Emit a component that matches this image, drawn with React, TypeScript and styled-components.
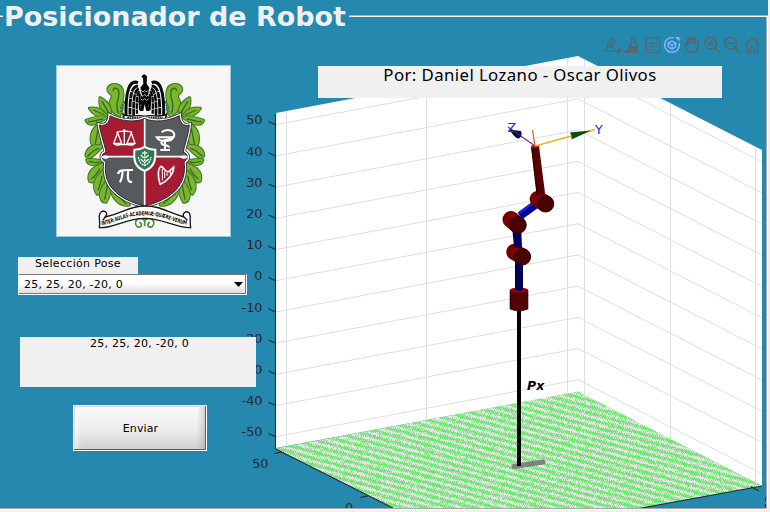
import React from "react";
import styled, { createGlobalStyle, css } from "styled-components";

const BLUE = "#2588ae";
const FACE = "#f0f0f0";

const Global = createGlobalStyle`
  html, body { margin: 0; padding: 0; background: ${FACE}; overflow: hidden; }
  * { box-sizing: border-box; }
`;

const Window = styled.div`
  width: 770px;
  height: 512px;
  background: ${FACE};
  font-family: "DejaVu Sans", sans-serif;
  color: #000;
`;

const Panel = styled.section`
  width: 768px;
  height: 510px;
  display: flex;
  flex-direction: column;
  background: ${BLUE};
`;

const Header = styled.header`
  height: 17px;
  display: flex;
  align-items: flex-end;
  flex: none;
`;

const Rule = styled.span<{ $w?: number }>`
  height: 2px;
  border-top: 1px solid #a5b0b5;
  background: #fff;
  ${(p) => (p.$w ? css`width: ${p.$w}px; flex: none;` : css`flex: 1;`)}
`;

const Title = styled.h1`
  width: 346px;
  height: 17px;
  margin: 0;
  padding-left: 1px;
  position: relative;
  z-index: 2;
  font-size: 26.95px;
  line-height: 33px;
  white-space: nowrap;
  color: ${FACE};
`;

const Body = styled.div`
  position: relative;
  flex: 1;
  min-height: 0;
  display: grid;
  grid-template-columns: 276px 1fr;
  border-right: 1px solid #fff;
  border-bottom: 1px solid #fff;
  box-shadow: inset -1px -1px 0 #a8a8a8;
`;

const PlotSvg = styled.svg`
  position: absolute;
  inset: 0;
  width: 766px;
  height: 491px;
  display: block;
`;

const Sidebar = styled.aside`
  position: relative;
  display: flex;
  flex-direction: column;
  align-items: flex-start;
  padding: 48px 0 0 18px;
`;

const CrestSvg = styled.svg`
  display: block;
  flex: none;
  width: 175px;
  height: 172px;
  margin: 0 0 20px 38px;
`;

const Caption = styled.label`
  width: 120px;
  height: 17px;
  background: ${FACE};
  font-size: 11px;
  line-height: 13px;
  letter-spacing: 0.32px;
  text-align: center;
`;

const Select = styled.button`
  width: 229px;
  height: 21px;
  display: flex;
  align-items: center;
  justify-content: space-between;
  padding: 0 3px 1px 5px;
  border: 1px solid;
  border-color: #777 #fff #fff #f4f4f4;
  border-radius: 0;
  box-shadow: inset -1px -1px 0 #777;
  background: linear-gradient(#fff 40%, #dcdcdc);
  color: #000;
  font: 11px "DejaVu Sans", sans-serif;
  letter-spacing: 0.22px;
`;

const Value = styled.output`
  width: 236px;
  height: 50px;
  margin: 42px 0 18px 2px;
  padding-left: 3px;
  background: ${FACE};
  font-size: 11px;
  line-height: 13px;
  letter-spacing: 0.22px;
  text-align: center;
`;

const Push = styled.button`
  width: 134px;
  height: 46px;
  margin-left: 55px;
  padding: 0 0 0 1px;
  border: 1px solid #fff;
  border-radius: 0;
  box-shadow: inset -1px -1px 0 #5c5c6c, inset 1px 1px 0 #d8d8dc;
  background:
    linear-gradient(90deg, rgba(170, 170, 175, 0) 93%, rgba(150, 150, 155, 0.45)),
    linear-gradient(90deg, rgba(255, 255, 255, 0.6), rgba(255, 255, 255, 0) 6%),
    linear-gradient(#fafafa, #eeeeee 50%, #d0d0d0);
  color: #000;
  font: 11px "DejaVu Sans", sans-serif;
  letter-spacing: 0.1px;
`;

const Main = styled.main`
  position: relative;
  display: flex;
  flex-direction: column;
`;

const Toolbar = styled.nav`
  display: flex;
  justify-content: flex-end;
  padding: 18px 5px 0 0;
  height: 49px;
`;

const Tool = styled.button<{ $active?: boolean }>`
  width: 20px;
  height: 20px;
  padding: 2px;
  border: 0;
  background: none;
  color: ${(p) => (p.$active ? "#86b4ff" : "#56676f")};
  svg { display: block; width: 16px; height: 16px; overflow: visible; }
`;

const Author = styled.p`
  width: 404px;
  height: 32px;
  margin: 0 0 0 42px;
  background: ${FACE};
  font-family: "Noto Sans", "DejaVu Sans", sans-serif;
  font-size: 16.8px;
  letter-spacing: 0.41px;
  line-height: 18px;
  text-align: center;
  white-space: nowrap;
`;

/* ---------- toolbar icons ---------- */

const tools: { name: string; active?: boolean; art: React.ReactNode }[] = [
  {
    name: "Exportar",
    art: (
      <>
        <path d="M0.500 14.500h10.500l-2-4.500H3.500zM3.500 10C3 5.500 5 3.500 8 3.500V0.800l4 3.800-4 3.400V5.800C6 5.800 5.500 7.500 6 10" />
        <path fill="currentColor" d="M12.500 15h3.500v-3.500z" />
      </>
    ),
  },
  {
    name: "Pincel",
    art: (
      <>
        <path d="M7.500 0.600h3.500v6l2 1.500v2H5.500V8l2-1.500z" />
        <path fill="currentColor" d="M5.500 10h7.500l.5 5.400H0C3 14 5 12.500 5.500 10z" />
      </>
    ),
  },
  {
    name: "Datos",
    art: <path d="M2.500 0.600h13v14.900h-13V10L0.500 8l2-2zM5.500 6.200h7.500M5.500 9.500h7.500" />,
  },
  {
    name: "Rotar 3D",
    active: true,
    art: (
      <>
        <path d="M9.500 0.700A7.400 7.400 0 1 0 15.200 6" strokeWidth="1.500" />
        <path fill="currentColor" stroke="none" d="M11 0h4.500v4.500z" />
        <path d="M8 4l3.700 2v4L8 12.200 4.300 10V6zM4.300 6L8 8.200 11.700 6M8 8.200v4" strokeWidth="1.300" />
      </>
    ),
  },
  {
    name: "Mover",
    art: (
      <path
        strokeWidth="1.400"
        d="M4.800 15.400C4 12 0.500 9 0.600 7.200c1-1 2.500.3 3.500 2L3 3c.3-1.300 1.700-1.300 2 0l1 4V1.500c.3-1.200 1.800-1.200 2 0V7l.7-5.200c.3-1.200 1.900-1.100 2 0L10.600 7.500l1.400-4c.5-1 2-.7 1.900.5C13.700 7 14.500 12 11.500 15.400z"
      />
    ),
  },
  {
    name: "Acercar",
    art: <path strokeWidth="1.500" d="M12.600 6.300a5.900 5.900 0 1 1-11.800 0a5.900 5.900 0 1 1 11.800 0M10.800 10.800l4.900 4.900M3.700 6.300h6M6.700 3.300v6" />,
  },
  {
    name: "Alejar",
    art: <path strokeWidth="1.500" d="M12.600 6.300a5.900 5.900 0 1 1-11.800 0a5.900 5.900 0 1 1 11.800 0M10.800 10.800l4.900 4.900M3.700 6.300h6" />,
  },
  {
    name: "Inicio",
    art: <path d="M0.500 8.500L8 1l7.500 7.500M12.500 5V1M2.800 7.500v8h3.700V10h3.200v5.500h3.700v-8" />,
  },
];

/* ---------- university crest ---------- */

const Leaf = ({ d, vein }: { d: string; vein: string }) => (
  <>
    <path d={d} fill="#3f7828" stroke="#3f7828" strokeWidth="9" strokeLinejoin="round" />
    <path d={d} fill="#7ab52b" stroke="#7ab52b" strokeWidth="3" />
    <path d={vein} fill="none" stroke="#2f6b2c" strokeWidth="4" />
  </>
);

const LeafSide = () => (
  <g>
    <Leaf d="M208 168C178 150 174 130 186 112C192 98 170 100 174 84C180 68 210 68 217 88C224 116 210 126 217 146Z" vein="M206 160C190 132 212 112 206 92C202 80 188 82 190 92" />
    <Leaf d="M180 165C158 158 146 138 150 112C172 124 186 142 180 165Z" vein="M176 160C170 145 162 133 155 122" />
    <Leaf d="M172 170C158 146 138 140 118 144C128 162 146 170 172 170Z" vein="M164 164L130 149" />
    <Leaf d="M170 172C150 166 128 172 108 180C114 198 140 192 150 184Z" vein="M160 176C140 176 128 188 114 183" />
    <Leaf d="M147 192C160 220 158 246 134 265C116 242 120 210 147 192Z" vein="M145 205C140 225 138 242 135 256" />
    <Leaf d="M158 258C134 250 108 262 108 286C114 302 134 284 158 258Z" vein="M148 264C132 266 120 280 112 288" />
    <Leaf d="M160 298C140 304 122 292 110 299C114 316 140 318 160 298Z" vein="M150 304C138 310 126 306 116 303" />
    <Leaf d="M158 310C138 318 110 330 118 362C134 374 158 342 158 310Z" vein="M150 325C142 338 134 350 124 356" />
    <Leaf d="M160 332C168 360 164 384 142 402C124 380 136 350 160 332Z" vein="M156 346C154 365 148 378 144 390" />
    <Leaf d="M174 360C186 378 180 408 168 426C142 424 148 382 174 360Z" vein="M172 374C170 392 166 406 164 418" />
    <Leaf d="M184 390C214 394 234 414 238 434C214 440 188 418 184 390Z" vein="M192 400C210 408 220 424 230 431" />
  </g>
);

const SHIELD = "M148 194C168 200 180 184 180 166C210 182 258 188 284 174C310 188 358 182 388 166C388 184 400 200 418 194C414 230 402 258 400 276C416 280 416 298 402 304C412 370 370 416 284 437C198 416 156 370 168 304C152 298 152 280 168 276C166 258 154 230 148 194Z";

const Wing = () => (
  <g fill="none" stroke="#0b0b0d">
    <path d="M264 67C240 58 226 86 228 172" strokeWidth="9" />
    <path d="M264 77C244 78 239 108 240 172" strokeWidth="8.500" strokeDasharray="26 2 18 2" />
    <path d="M266 84C252 92 250 122 251 168" strokeWidth="8" strokeDasharray="20 2" />
    <path d="M268 92C259 106 260 130 261 160" strokeWidth="7" strokeDasharray="17 2" />
    <path d="M270 100C266 120 270 132 270 150" strokeWidth="6" />
  </g>
);

const Crest = () => (
  <CrestSvg viewBox="18 14 525 516" role="img" aria-label="Escudo">
    <defs>
      <clipPath id="shield"><path d={SHIELD} /></clipPath>
      <path id="motto" d="M154 491C192 488 220 462 284 462C348 462 378 488 416 491" />
    </defs>
    <rect x="18" y="14" width="525" height="516" fill="#9cc8d8" />
    <rect x="21" y="17" width="519" height="510" fill="#f6f6f6" />
    <LeafSide />
    <g transform="translate(569 0) scale(-1 1)"><LeafSide /></g>
    <path d="M226 125C206 140 214 168 232 176M343 125C363 140 355 168 337 176" fill="none" stroke="#397a4a" strokeWidth="9" strokeDasharray="6 3" />
    <Wing />
    <g transform="translate(569 0) scale(-1 1)"><Wing /></g>
    <path d="M274 48L283 41L291 48L290 70L298 82L294 104L304 124L296 134L298 152H289L284 132L280 152H270L274 134L264 124L276 104L271 82L280 70L279 54Z" fill="#09090b" />
    <path d="M274 90l5 5 5-5 5 5 5-5M273 103l6 5 5-5 6 5 5-5M272 115l6 5 6-5 6 5 6-5" fill="none" stroke="#fff" strokeWidth="2" />
    <path d="M220 163C242 174 264 160 284 168C304 160 326 174 349 163L345 178C324 186 300 172 284 187C268 172 244 186 224 178Z" fill="#fff" stroke="#111" strokeWidth="4" />
    <path d="M232 172C250 176 266 168 280 174M288 174C306 168 320 176 338 172" fill="none" stroke="#222" strokeWidth="5" strokeDasharray="5 2" />
    <path d={SHIELD} fill="#fff" stroke="#333235" strokeWidth="15" />
    <path d={SHIELD} fill="#fff" stroke="#fff" strokeWidth="10" />
    <g clipPath="url(#shield)">
      <path fill="#a51b31" d="M140 150H284V289H140zM284 289H430V450H284z" />
      <path fill="#565a5d" d="M284 150H430V289H284zM140 289H284V450H140z" />
      <path d="M284 150V450M140 289H430" stroke="#fff" strokeWidth="5" />
    </g>
    <path d={SHIELD} fill="none" stroke="#2c2b2e" strokeWidth="3" />
    <path d="M155 290C166 280 180 289 180 289C172 298 158 296 155 290M414 290C403 280 389 289 389 289C397 298 411 296 414 290" fill="#fff" />
    <g fill="none" stroke="#fff" strokeWidth="4">
      <path d="M199 217C212 210 216 216 223 211C230 216 236 210 247 217M223 206V252M208 253H238M203 218L191 249H215ZM244 218L231 249H255Z" />
      <path d="M192 250Q203 258 214 250M232 250Q243 258 254 250" strokeWidth="5" />
      <path d="M320 231H370C364 246 328 246 320 231ZM345 240V266M331 269H360" strokeWidth="6" />
      <path d="M335 216C348 204 372 208 373 224C374 241 335 234 334 247C334 258 358 251 357 262" strokeWidth="6" />
      <path d="M330 371C322 346 324 324 333 318C343 322 345 337 356 334L371 320C372 340 350 364 331 372Z" strokeWidth="5" />
      <path d="M337 326V360M344 334V353M351 338V347M361 333V343" strokeWidth="3" />
    </g>
    <path d="M204 341C207 328 216 329 249 329M218 330C217 346 216 359 209 366M235 330C232 352 233 368 246 364" fill="none" stroke="#fff" strokeWidth="6.500" />
    <path d="M250 265Q269 266 284 256Q300 266 319 265C321 304 315 323 284 335C253 323 247 304 250 265Z" fill="#fff" />
    <path d="M256 271Q271 271 284 263Q299 271 313 271C314 300 309 318 284 328C259 318 254 300 256 271Z" fill="#2f7951" />
    <g stroke="#e7f3e9" fill="none" strokeWidth="4">
      <path d="M265 290Q268 309 284 316Q300 309 303 290M284 272V317" strokeDasharray="6 2" />
      <path d="M272 284l10 9M296 284l-10 9M272 296l10 9M296 296l-10 9M276 278h16" />
    </g>
    <path d="M284 472v26M284 480C264 464 248 486 262 499C274 504 280 490 268 486M284 480C304 464 320 486 306 499C294 504 288 490 300 486" fill="none" stroke="#4c8b37" strokeWidth="5" />
    <path d="M150 459C144 470 152 480 148 502C192 504 226 474 284 474C342 474 376 504 422 502C418 480 424 470 418 458C408 448 394 462 402 470C344 452 330 437 284 437C238 437 226 455 166 470C178 454 158 446 150 459Z" fill="#fff" stroke="#161616" strokeWidth="4" />
    <path d="M166 470L158 480M402 470L412 480" stroke="#161616" strokeWidth="4" />
    <text fontFamily="DejaVu Sans" fontWeight="bold" fontSize="17" fill="#080808" dy="3">
      <textPath href="#motto" textLength="264" lengthAdjust="spacingAndGlyphs">INTER·AULAS·ACADEMIÆ·QUÆRE·VERUM</textPath>
    </text>
  </CrestSvg>
);

/* ---------- 3D axes ---------- */

const STEP = 31.2;
const levels = Array.from({ length: 11 }, (_, i) => ({
  label: String(50 - i * 10),
  y: 124.7 + i * STEP,
}));

/* Wire mesh of the floor, sampled at one cell per pixel. */
const floorMesh = (() => {
  let d = "";
  for (let y = 390; y < 509; y++) {
    let start = -1;
    for (let x = 276; x <= 763; x++) {
      const wave = Math.sin((2 * Math.PI * (y - 0.27 * x)) / 6.3);
      const fine = (x + ((y * 3) >> 1)) % 2 ? 0.6 : -0.55;
      const n = Math.sin(x * 12.9898 + y * 78.233) * 43758.5453;
      const on = x < 763 && wave * 0.95 + fine + (n - Math.floor(n) - 0.5) * 1.1 > -0.02;
      if (on && start < 0) start = x;
      if (!on && start >= 0) {
        d += `M${start} ${y}h${x - start}v1h${start - x}z`;
        start = -1;
      }
    }
  }
  return d;
})();

const verticals = [
  [286.5, 111, 447],
  [426.5, 84.5, 420],
  [567.5, 58, 394],
  [584.5, 59, 395],
  [670.5, 103, 439],
  [755.5, 147, 482],
];

type Pt = [number, number];
const Joint = ({ back, front, r }: { back: Pt; front: Pt; r: number }) => (
  <g>
    <path d={`M${back}L${front}`} stroke="#760000" strokeWidth={r * 2} strokeLinecap="round" />
    <path d={`M${back[0] + 2} ${back[1] - 3}L${front[0] + 1} ${front[1] - 4}`} stroke="#900303" strokeWidth={r * 0.7} strokeLinecap="round" />
    <circle cx={front[0]} cy={front[1]} r={r} fill="#480000" stroke="#220000" strokeWidth="0.7" />
  </g>
);

const Plot = () => (
  <PlotSvg viewBox="0 17 766 491">
    <defs>
      <clipPath id="walls"><path d="M276 113L578 56L762 150V486L578 392L276 448Z" /></clipPath>
      <clipPath id="floor"><path d="M276 448.500L578 391.500L762 486L639 508H393Z" /></clipPath>
      <linearGradient id="rod" x1="0" x2="1"><stop stopColor="#00003c" /><stop offset=".6" stopColor="#00006a" /><stop offset="1" stopColor="#000040" /></linearGradient>
    </defs>
    <path d="M276 113L578 56L762 150V486L578 392L276 448Z" fill="#fff" />
    <g clipPath="url(#walls)" stroke="#dedede" fill="none">
      {levels.map((l) => <path key={l.label} d={`M276 ${l.y}L578 ${l.y - 57}L762 ${l.y + 37}`} />)}
      {verticals.map(([x, a, b]) => <path key={x} d={`M${x} ${a}V${b}`} />)}
    </g>
    <g clipPath="url(#floor)">
      <path d="M276 390H763V508H276z" fill="#e4e4e4" />
      <path d={floorMesh} fill="#70e970" shapeRendering="crispEdges" />
    </g>
    <g stroke="#26292b" fill="none" strokeWidth="1.100">
      <path d="M275.500 114V449L393 508M762 486L639 508.500M274 453.500L282 452M360 497.500L368 496M751 486.500L759 491" />
      {levels.map((l) => <path key={l.label} d={`M268.500 ${l.y - 3.2}L275.500 ${l.y}`} />)}
      <path d="M765.500 497V501M765.500 504V507" />
    </g>
    <g fontFamily="DejaVu Sans" fontSize="12.800" fill="#262626">
      {levels.map((l) => <text key={l.label} x="262.500" y={l.y - 0.4} textAnchor="end">{l.label}</text>)}
      <text x="268.500" y="468" textAnchor="end">50</text>
      <text x="345" y="512">0</text>
    </g>

    <path d="M514 466.500L543 462" stroke="#808080" strokeWidth="5" strokeLinecap="round" />
    <path d="M519 308V466" stroke="#000" strokeWidth="4" />
    <path d="M510 290V309Q519 313 528 309V290z" fill="#550000" stroke="#240000" strokeWidth=".6" />
    <ellipse cx="519" cy="290" rx="9" ry="2.500" fill="#980505" />
    <path d="M515 258H523V290Q519 292 515 290z" fill="url(#rod)" />
    <Joint back={[514.5, 252]} front={[522.5, 256.8]} r={8.2} />
    <path d="M512 226L521 226L522 247Q518 249 514 247z" fill="url(#rod)" />
    <Joint back={[511, 219.5]} front={[517.8, 225]} r={8.5} />
    <path d="M520 216L538 203" stroke="#00009a" strokeWidth="8" />
    <path d="M519 213L536 200.500" stroke="#2222d8" strokeWidth="2.500" />
    <Joint back={[538, 199]} front={[545.5, 203.8]} r={8.3} />
    <path d="M531 147L539 146L545 193Q541 197 536.500 195z" fill="#560000" />
    <path d="M532 148L537.500 195" stroke="#2b0000" />
    <ellipse cx="535" cy="146.500" rx="4" ry="1.500" fill="#b80808" />
    <path d="M535 146L508 127" stroke="#7e2f8e" strokeWidth="1.200" />
    <path d="M509.500 129.500L521 131Q523 136 519 138.500Q515 139 509.500 129.500z" fill="#0b0b4c" />
    <path d="M508 127L522 137" stroke="#7e2f8e" strokeWidth=".7" />
    <path d="M535 146L532.500 130" stroke="#d95319" strokeWidth="1.200" />
    <path d="M535 146L595 129.500" stroke="#edb120" strokeWidth="1.300" />
    <path d="M570 132.500L591 130.500L571.500 139.500Q572 135 570 132.500z" fill="#064f0b" />
    <g fontFamily="DejaVu Sans" fontSize="12.500" fill="#2020f0">
      <text x="507.500" y="131.500">Z</text>
      <text x="595" y="134">Y</text>
    </g>
    <text x="527" y="390" fontFamily="DejaVu Sans" fontSize="12.500" fontWeight="bold" fontStyle="italic">Px</text>
  </PlotSvg>
);

export default function App() {
  return (
    <Window>
      <Global />
      <Panel>
        <Header>
          <Rule $w={3} />
          <Title>Posicionador de Robot</Title>
          <Rule />
        </Header>
        <Body>
          <Plot />
          <Sidebar>
            <Crest />
            <Caption>Selección Pose</Caption>
            <Select>
              25, 25, 20, -20, 0
              <svg width="9" height="5" viewBox="0 0 9 5"><path d="M0 0H9L4.500 5z" /></svg>
            </Select>
            <Value>25, 25, 20, -20, 0</Value>
            <Push>Enviar</Push>
          </Sidebar>
          <Main>
            <Toolbar>
              {tools.map((t) => (
                <Tool key={t.name} aria-label={t.name} $active={t.active}>
                  <svg viewBox="0 0 16 16" fill="none" stroke="currentColor" strokeWidth="1.150">{t.art}</svg>
                </Tool>
              ))}
            </Toolbar>
            <Author>Por: Daniel Lozano - Oscar Olivos</Author>
          </Main>
        </Body>
      </Panel>
    </Window>
  );
}
